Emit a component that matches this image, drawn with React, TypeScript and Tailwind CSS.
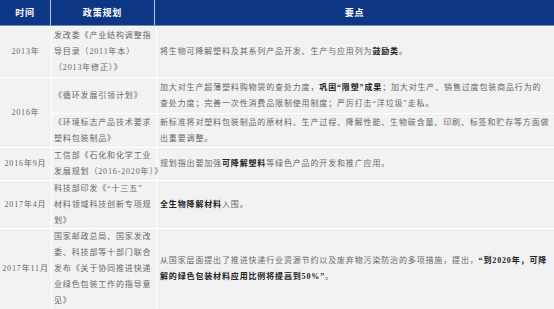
const FONT = "font-['Liberation_Serif','Noto_Sans_CJK_SC',serif]";

function Lines({ lines }: { lines: React.ReactNode[] }) {
  return (
    <div className="whitespace-nowrap">
      {lines.map((l, i) => (
        <div key={i}>{l}</div>
      ))}
    </div>
  );
}

const B = ({ children }: { children: React.ReactNode }) => (
  <b className="font-bold text-[#222]">{children}</b>
);

const cell = "bg-[#f2f2f2] flex items-center";

export default function App() {
  return (
    <div
      className={`${FONT} w-[554px] h-[309px] bg-white text-[8px] leading-[16px] tracking-[0.85px] text-[#666] overflow-hidden`}
    >
      {/* header */}
      <div className="grid grid-cols-[51px_104px_1fr] h-[26px] bg-[#0d3685] border-b border-[#6f88bd] text-white font-bold text-[9px]">
        <div className="flex items-center justify-center border-r border-[#b9c6e0]">时间</div>
        <div className="flex items-center justify-center border-r border-[#b9c6e0]">政策规划</div>
        <div className="flex items-center justify-center">要点</div>
      </div>

      {/* body */}
      <div className="grid grid-cols-[51px_104px_1fr] grid-rows-[50px_35px_33px_32px_47px_80px] gap-px pt-px">
        {/* 2013 */}
        <div className={`${cell} justify-center`}>2013年</div>
        <div className={`${cell} pl-[2px]`}>
          <Lines lines={["发改委《产业结构调整指", "导目录（2011年本）", "（2013年修正）》"]} />
        </div>
        <div className={`${cell} pl-[3px]`}>
          <Lines lines={[<>将生物可降解塑料及其系列产品开发、生产与应用列为<B>鼓励类</B>。</>]} />
        </div>

        {/* 2016 */}
        <div className={`${cell} justify-center row-span-2`}>2016年</div>
        <div className={`${cell} pl-[2px]`}>
          <Lines lines={["《循环发展引领计划》"]} />
        </div>
        <div className={`${cell} pl-[3px]`}>
          <Lines
            lines={[
              <>加大对生产超薄塑料购物袋的查处力度，<B>巩固“限塑”成果</B>；加大对生产、销售过度包装商品行为的</>,
              "查处力度；完善一次性消费品限制使用制度；严厉打击“洋垃圾”走私。",
            ]}
          />
        </div>
        <div className={`${cell} pl-[2px]`}>
          <Lines lines={["《环境标志产品技术要求", "塑料包装制品》"]} />
        </div>
        <div className={`${cell} pl-[3px]`}>
          <Lines
            lines={[
              "新标准将对塑料包装制品的原材料、生产过程、降解性能、生物碳含量、印刷、标签和贮存等方面做",
              "出重要调整。",
            ]}
          />
        </div>

        {/* 2016.9 */}
        <div className={`${cell} justify-center`}>2016年9月</div>
        <div className={`${cell} pl-[2px] overflow-visible relative z-10`}>
          <Lines lines={["工信部《石化和化学工业", "发展规划（2016-2020年）》"]} />
        </div>
        <div className={`${cell} pl-[3px]`}>
          <Lines lines={[<>规划指出要加强<B>可降解塑料</B>等绿色产品的开发和推广应用。</>]} />
        </div>

        {/* 2017.4 */}
        <div className={`${cell} justify-center`}>2017年4月</div>
        <div className={`${cell} pl-[2px]`}>
          <Lines lines={["科技部印发《“十三五”", "材料领域科技创新专项规", "划》"]} />
        </div>
        <div className={`${cell} pl-[3px]`}>
          <Lines lines={[<><B>全生物降解材料</B>入围。</>]} />
        </div>

        {/* 2017.11 */}
        <div className={`${cell} justify-center`}>2017年11月</div>
        <div className={`${cell} pl-[2px]`}>
          <Lines
            lines={[
              "国家邮政总局、国家发改",
              "委、科技部等十部门联合",
              "发布《关于协同推进快递",
              "业绿色包装工作的指导意",
              "见》",
            ]}
          />
        </div>
        <div className={`${cell} pl-[3px]`}>
          <Lines
            lines={[
              <>从国家层面提出了推进快递行业资源节约以及废弃物污染防治的多项措施，提出，<B>“到2020年，可降</B></>,
              <><B>解的绿色包装材料应用比例将提高到50%”</B>。</>,
            ]}
          />
        </div>
      </div>
    </div>
  );
}
